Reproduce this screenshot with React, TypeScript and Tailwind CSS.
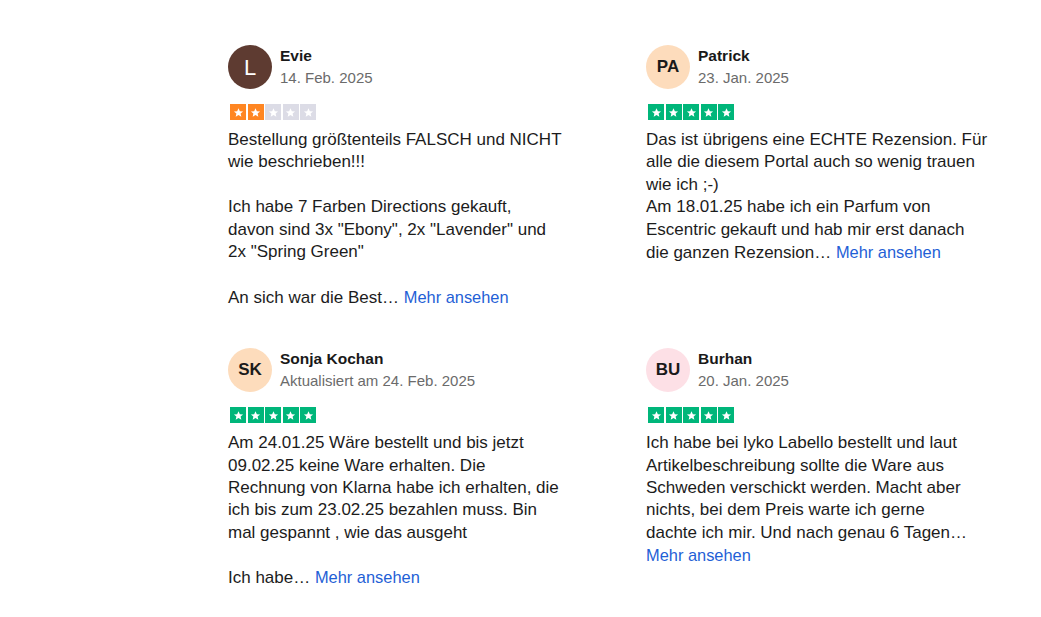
import React from "react";

type Review = {
  name: string;
  date: string;
  initials: string;
  avatarBg: string;
  avatarText: string;
  rating: number;
  color: string;
  lines: string[];
  lastPrefix: string;
};

const reviews: Review[] = [
  {
    name: "Evie",
    date: "14. Feb. 2025",
    initials: "L",
    avatarBg: "bg-[#5e3b31]",
    avatarText: "text-white font-normal text-[22px]",
    rating: 2,
    color: "#ff8622",
    lines: [
      "Bestellung größtenteils FALSCH und NICHT",
      "wie beschrieben!!!",
      "",
      "Ich habe 7 Farben Directions gekauft,",
      'davon sind 3x "Ebony", 2x "Lavender" und',
      '2x "Spring Green"',
      "",
    ],
    lastPrefix: "An sich war die Best…",
  },
  {
    name: "Patrick",
    date: "23. Jan. 2025",
    initials: "PA",
    avatarBg: "bg-[#fddcbc]",
    avatarText: "text-[#1a1a1a] font-bold text-[17px]",
    rating: 5,
    color: "#00b67a",
    lines: [
      "Das ist übrigens eine ECHTE Rezension. Für",
      "alle die diesem Portal auch so wenig trauen",
      "wie ich ;-)",
      "Am 18.01.25 habe ich ein Parfum von",
      "Escentric gekauft und hab mir erst danach",
    ],
    lastPrefix: "die ganzen Rezension…",
  },
  {
    name: "Sonja Kochan",
    date: "Aktualisiert am 24. Feb. 2025",
    initials: "SK",
    avatarBg: "bg-[#fddcbc]",
    avatarText: "text-[#1a1a1a] font-bold text-[17px]",
    rating: 5,
    color: "#00b67a",
    lines: [
      "Am 24.01.25 Wäre bestellt und bis jetzt",
      "09.02.25 keine Ware erhalten. Die",
      "Rechnung von Klarna habe ich erhalten, die",
      "ich bis zum 23.02.25 bezahlen muss. Bin",
      "mal gespannt , wie das ausgeht",
      "",
    ],
    lastPrefix: "Ich habe…",
  },
  {
    name: "Burhan",
    date: "20. Jan. 2025",
    initials: "BU",
    avatarBg: "bg-[#fde0e6]",
    avatarText: "text-[#1a1a1a] font-bold text-[17px]",
    rating: 5,
    color: "#00b67a",
    lines: [
      "Ich habe bei lyko Labello bestellt und laut",
      "Artikelbeschreibung sollte die Ware aus",
      "Schweden verschickt werden. Macht aber",
      "nichts, bei dem Preis warte ich gerne",
      "dachte ich mir. Und nach genau 6 Tagen…",
    ],
    lastPrefix: "",
  },
];

function Star({ filled, color }: { filled: boolean; color: string }) {
  return (
    <div
      className="w-4 h-4 flex items-center justify-center"
      style={{ backgroundColor: filled ? color : "#dcdce6" }}
    >
      <svg viewBox="0 0 24 24" className="w-[11px] h-[11px]" fill="white">
        <path d="M12 2.5l2.9 6.6 7.1.6-5.4 4.7 1.6 7-6.2-3.7-6.2 3.7 1.6-7L2 9.7l7.1-.6z" />
      </svg>
    </div>
  );
}

function Card({ r }: { r: Review }) {
  return (
    <div className="flex flex-col">
      <div className="flex items-center gap-2">
        <div
          className={`w-11 h-11 rounded-full flex items-center justify-center shrink-0 ${r.avatarBg} ${r.avatarText}`}
        >
          {r.initials}
        </div>
        <div className="flex flex-col">
          <div className="text-[15.5px] leading-[22px] font-bold text-[#191919]">{r.name}</div>
          <div className="text-[15px] leading-[22px] text-[#6b6b6b]">{r.date}</div>
        </div>
      </div>
      <div className="flex gap-[1.5px] mt-[15px] ml-[2px]">
        {[0, 1, 2, 3, 4].map((i) => (
          <Star key={i} filled={i < r.rating} color={r.color} />
        ))}
      </div>
      <div className="mt-[9px] text-[17px] leading-[22.4px] text-[#1c1c1c] whitespace-nowrap">
        {r.lines.map((l, i) => (
          <div key={i} className="h-[22.4px]">
            {l}
          </div>
        ))}
        <div className="h-[22.4px]">
          {r.lastPrefix}
          {r.lastPrefix ? " " : ""}
          <span className="text-[16.4px] text-[#1f5fd6]">Mehr ansehen</span>
        </div>
      </div>
    </div>
  );
}

export default function App() {
  return (
    <div
      className="w-[1041px] h-[617px] bg-white overflow-hidden"
      style={{ fontFamily: '"Liberation Sans", Arial, Helvetica, sans-serif' }}
    >
      <div className="pl-[228px] pt-[45px] grid grid-cols-[344px_344px] gap-x-[74px] gap-y-[40px]">
        {reviews.map((r, i) => (
          <Card key={i} r={r} />
        ))}
      </div>
    </div>
  );
}
